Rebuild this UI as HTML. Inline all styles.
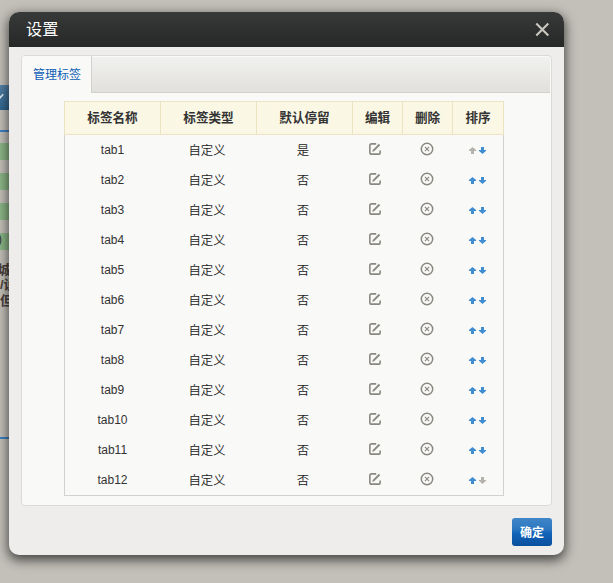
<!DOCTYPE html>
<html lang="zh-CN">
<head>
<meta charset="utf-8">
<title>设置</title>
<style>
*{box-sizing:border-box;margin:0;padding:0}
html,body{width:613px;height:583px;overflow:hidden}
body{background:#c3c0b9;font-family:"Liberation Sans","Noto Sans CJK SC",sans-serif;position:relative;font-size:12px;color:#333}
.bgstrip{position:absolute;left:0;top:0;width:12px;height:583px;overflow:hidden}
.bgstrip div{position:absolute;left:0}
.bgstrip .tx{font-size:13px;font-weight:bold;color:#4a3f3c;line-height:15px;white-space:nowrap}
.dlg{position:absolute;left:9px;top:12px;width:555px;height:543px;border-radius:10px;background:#eeedeb;box-shadow:0 4px 12px 1px rgba(0,0,0,.66);overflow:hidden}
.hd{position:absolute;left:0;top:0;width:100%;height:35px;background:linear-gradient(#373a38,#262827)}
.hd .t{position:absolute;left:17px;top:6px;font-size:16.2px;line-height:22px;color:#fff}
.hd svg{position:absolute;left:526px;top:10px;overflow:visible}
.panel{position:absolute;left:12px;top:43px;width:531px;height:451px;border:1px solid #dbdad6;border-radius:4px;background:#f9f9f7}
.strip{position:absolute;left:1px;top:1px;width:527px;height:36px;background:linear-gradient(#f1f1ef,#e1e0dd);border-bottom:1px solid #d2d1ce;border-radius:2px 2px 0 0}
.tab{position:absolute;left:0;top:0;width:70px;height:37px;background:#f9f9f7;border-right:1px solid #d2d1ce;border-radius:3px 0 0 0;color:#0e5db6;font-size:12px;line-height:39px;text-align:center;padding-left:1px}
/* table: page x 64..504, y 101..496 ; panel content origin at page (22,56) */
.tbl{position:absolute;left:42px;top:45px;width:440px;height:395px;border:1px solid #d3d2ce;background:#f9f9f7}
.th{position:absolute;left:-1px;top:-1px;width:440px;height:34px;background:#faf7e5;border:1px solid #ebe4c3}
.th span{position:absolute;top:0;height:32px;line-height:32.4px;text-align:center;font-size:12.6px;font-weight:bold;color:#333;border-left:1px solid #ebe4c3}
.th span:first-child{border-left:none}
.r{position:absolute;left:0;width:438px;height:30px}
.r span{position:absolute;top:0;height:30px;line-height:30px;text-align:center;font-size:12px;color:#333}
.r .k{font-weight:350;color:#222;font-size:12.4px}
.c1{left:0;width:95px}.c2{left:94px;width:96px;top:1px!important}.c3{left:190px;width:96px;top:1px!important}
.r svg{position:absolute}
.ie{left:304px;top:8px}.id{left:355px;top:7.1px}.ia{left:403.8px;top:11.8px}
.btn{position:absolute;left:503px;top:506px;width:40px;height:28px;border-radius:3px;background:linear-gradient(#4086c8 0%,#2b77c0 40%,#1163b8 55%,#0a4f9e 100%);color:#fff;font-size:12px;font-weight:bold;line-height:30px;text-align:center}
</style>
</head>
<body>
<div class="bgstrip">
  <div style="top:85px;width:9px;height:25px;background:linear-gradient(#5583a8,#2f6590)"></div>
  <div style="top:130px;width:9px;height:1.6px;background:#3b82c4"></div>
  <div style="top:143px;width:9px;height:17px;background:#8cb687"></div>
  <div style="top:173px;width:9px;height:17px;background:#8cb687"></div>
  <div style="top:203px;width:9px;height:17px;background:#8cb687"></div>
  <div style="top:233px;width:9px;height:17px;background:#8cb687"></div>
  <div class="tx" style="top:232px;left:-2px;font-weight:normal;font-size:12px;color:#333">)</div>
  <svg style="position:absolute;left:0;top:92px" width="6" height="10" viewBox="0 0 6 10"><path d="M-3.6 3.4L-0.6 6.4L3.2 2.2" stroke="#e8eef4" stroke-width="1.6" fill="none"/></svg>
  <div class="tx" style="top:261.5px;left:-2px">城</div>
  <div class="tx" style="top:277px;left:0">/设</div>
  <div class="tx" style="top:293px;left:0">但</div>
  <div style="top:437.3px;width:9px;height:1.6px;background:#3b82c4"></div>
</div>
<div class="dlg">
  <div class="hd"><span class="t">设置</span>
    <svg width="14" height="14" viewBox="0 0 14 14"><path d="M1.3 1.5L13.3 13.5M13.3 1.5L1.3 13.5" stroke="#cbc8c1" stroke-width="2.1" fill="none"/></svg>
  </div>
  <div class="panel">
    <div class="strip"></div>
    <div class="tab">管理标签</div>
    <div class="tbl">
      <div class="th"><span style="left:0;width:95px">标签名称</span><span style="left:95px;width:96px">标签类型</span><span style="left:191px;width:96px">默认停留</span><span style="left:287px;width:50px">编辑</span><span style="left:337px;width:50px">删除</span><span style="left:387px;width:51px">排序</span></div>
      <div class="r" style="top:33px"><span class="c1">tab1</span><span class="c2 k">自定义</span><span class="c3 k">是</span><svg class="ie" width="12" height="12" viewBox="0 0 12 12"><path d="M7.2 0.85H2.6Q0.85 0.85 0.85 2.6V9.4Q0.85 11.15 2.6 11.15H9.4Q11.15 11.15 11.15 9.4V7.6" stroke="#8b8882" stroke-width="1.6" fill="none"/><path d="M3.2 8.8L3.75 6.9L9.85 0.8L11.2 2.15L5.1 8.25Z" fill="#8b8882"/></svg><svg class="id" width="14" height="14" viewBox="0 0 14 14"><circle cx="7" cy="7" r="5.7" stroke="#8b8882" stroke-width="1.5" fill="none"/><path d="M4.9 4.9L9.1 9.1M9.1 4.9L4.9 9.1" stroke="#8b8882" stroke-width="1.15"/></svg><svg class="ia" width="18" height="8" viewBox="0 0 18 8" style="overflow:visible"><path d="M3.5 0L7.1 3.1V4H5V6.9H2V4H-0.1V3.1Z" fill="#b5b3ac"/><path d="M13.5 6.9L17.1 3.8V2.9H15V0H12V2.9H9.9V3.8Z" fill="#408dd2"/></svg></div>
      <div class="r" style="top:63px"><span class="c1">tab2</span><span class="c2 k">自定义</span><span class="c3 k">否</span><svg class="ie" width="12" height="12" viewBox="0 0 12 12"><path d="M7.2 0.85H2.6Q0.85 0.85 0.85 2.6V9.4Q0.85 11.15 2.6 11.15H9.4Q11.15 11.15 11.15 9.4V7.6" stroke="#8b8882" stroke-width="1.6" fill="none"/><path d="M3.2 8.8L3.75 6.9L9.85 0.8L11.2 2.15L5.1 8.25Z" fill="#8b8882"/></svg><svg class="id" width="14" height="14" viewBox="0 0 14 14"><circle cx="7" cy="7" r="5.7" stroke="#8b8882" stroke-width="1.5" fill="none"/><path d="M4.9 4.9L9.1 9.1M9.1 4.9L4.9 9.1" stroke="#8b8882" stroke-width="1.15"/></svg><svg class="ia" width="18" height="8" viewBox="0 0 18 8" style="overflow:visible"><path d="M3.5 0L7.1 3.1V4H5V6.9H2V4H-0.1V3.1Z" fill="#408dd2"/><path d="M13.5 6.9L17.1 3.8V2.9H15V0H12V2.9H9.9V3.8Z" fill="#408dd2"/></svg></div>
      <div class="r" style="top:93px"><span class="c1">tab3</span><span class="c2 k">自定义</span><span class="c3 k">否</span><svg class="ie" width="12" height="12" viewBox="0 0 12 12"><path d="M7.2 0.85H2.6Q0.85 0.85 0.85 2.6V9.4Q0.85 11.15 2.6 11.15H9.4Q11.15 11.15 11.15 9.4V7.6" stroke="#8b8882" stroke-width="1.6" fill="none"/><path d="M3.2 8.8L3.75 6.9L9.85 0.8L11.2 2.15L5.1 8.25Z" fill="#8b8882"/></svg><svg class="id" width="14" height="14" viewBox="0 0 14 14"><circle cx="7" cy="7" r="5.7" stroke="#8b8882" stroke-width="1.5" fill="none"/><path d="M4.9 4.9L9.1 9.1M9.1 4.9L4.9 9.1" stroke="#8b8882" stroke-width="1.15"/></svg><svg class="ia" width="18" height="8" viewBox="0 0 18 8" style="overflow:visible"><path d="M3.5 0L7.1 3.1V4H5V6.9H2V4H-0.1V3.1Z" fill="#408dd2"/><path d="M13.5 6.9L17.1 3.8V2.9H15V0H12V2.9H9.9V3.8Z" fill="#408dd2"/></svg></div>
      <div class="r" style="top:123px"><span class="c1">tab4</span><span class="c2 k">自定义</span><span class="c3 k">否</span><svg class="ie" width="12" height="12" viewBox="0 0 12 12"><path d="M7.2 0.85H2.6Q0.85 0.85 0.85 2.6V9.4Q0.85 11.15 2.6 11.15H9.4Q11.15 11.15 11.15 9.4V7.6" stroke="#8b8882" stroke-width="1.6" fill="none"/><path d="M3.2 8.8L3.75 6.9L9.85 0.8L11.2 2.15L5.1 8.25Z" fill="#8b8882"/></svg><svg class="id" width="14" height="14" viewBox="0 0 14 14"><circle cx="7" cy="7" r="5.7" stroke="#8b8882" stroke-width="1.5" fill="none"/><path d="M4.9 4.9L9.1 9.1M9.1 4.9L4.9 9.1" stroke="#8b8882" stroke-width="1.15"/></svg><svg class="ia" width="18" height="8" viewBox="0 0 18 8" style="overflow:visible"><path d="M3.5 0L7.1 3.1V4H5V6.9H2V4H-0.1V3.1Z" fill="#408dd2"/><path d="M13.5 6.9L17.1 3.8V2.9H15V0H12V2.9H9.9V3.8Z" fill="#408dd2"/></svg></div>
      <div class="r" style="top:153px"><span class="c1">tab5</span><span class="c2 k">自定义</span><span class="c3 k">否</span><svg class="ie" width="12" height="12" viewBox="0 0 12 12"><path d="M7.2 0.85H2.6Q0.85 0.85 0.85 2.6V9.4Q0.85 11.15 2.6 11.15H9.4Q11.15 11.15 11.15 9.4V7.6" stroke="#8b8882" stroke-width="1.6" fill="none"/><path d="M3.2 8.8L3.75 6.9L9.85 0.8L11.2 2.15L5.1 8.25Z" fill="#8b8882"/></svg><svg class="id" width="14" height="14" viewBox="0 0 14 14"><circle cx="7" cy="7" r="5.7" stroke="#8b8882" stroke-width="1.5" fill="none"/><path d="M4.9 4.9L9.1 9.1M9.1 4.9L4.9 9.1" stroke="#8b8882" stroke-width="1.15"/></svg><svg class="ia" width="18" height="8" viewBox="0 0 18 8" style="overflow:visible"><path d="M3.5 0L7.1 3.1V4H5V6.9H2V4H-0.1V3.1Z" fill="#408dd2"/><path d="M13.5 6.9L17.1 3.8V2.9H15V0H12V2.9H9.9V3.8Z" fill="#408dd2"/></svg></div>
      <div class="r" style="top:183px"><span class="c1">tab6</span><span class="c2 k">自定义</span><span class="c3 k">否</span><svg class="ie" width="12" height="12" viewBox="0 0 12 12"><path d="M7.2 0.85H2.6Q0.85 0.85 0.85 2.6V9.4Q0.85 11.15 2.6 11.15H9.4Q11.15 11.15 11.15 9.4V7.6" stroke="#8b8882" stroke-width="1.6" fill="none"/><path d="M3.2 8.8L3.75 6.9L9.85 0.8L11.2 2.15L5.1 8.25Z" fill="#8b8882"/></svg><svg class="id" width="14" height="14" viewBox="0 0 14 14"><circle cx="7" cy="7" r="5.7" stroke="#8b8882" stroke-width="1.5" fill="none"/><path d="M4.9 4.9L9.1 9.1M9.1 4.9L4.9 9.1" stroke="#8b8882" stroke-width="1.15"/></svg><svg class="ia" width="18" height="8" viewBox="0 0 18 8" style="overflow:visible"><path d="M3.5 0L7.1 3.1V4H5V6.9H2V4H-0.1V3.1Z" fill="#408dd2"/><path d="M13.5 6.9L17.1 3.8V2.9H15V0H12V2.9H9.9V3.8Z" fill="#408dd2"/></svg></div>
      <div class="r" style="top:213px"><span class="c1">tab7</span><span class="c2 k">自定义</span><span class="c3 k">否</span><svg class="ie" width="12" height="12" viewBox="0 0 12 12"><path d="M7.2 0.85H2.6Q0.85 0.85 0.85 2.6V9.4Q0.85 11.15 2.6 11.15H9.4Q11.15 11.15 11.15 9.4V7.6" stroke="#8b8882" stroke-width="1.6" fill="none"/><path d="M3.2 8.8L3.75 6.9L9.85 0.8L11.2 2.15L5.1 8.25Z" fill="#8b8882"/></svg><svg class="id" width="14" height="14" viewBox="0 0 14 14"><circle cx="7" cy="7" r="5.7" stroke="#8b8882" stroke-width="1.5" fill="none"/><path d="M4.9 4.9L9.1 9.1M9.1 4.9L4.9 9.1" stroke="#8b8882" stroke-width="1.15"/></svg><svg class="ia" width="18" height="8" viewBox="0 0 18 8" style="overflow:visible"><path d="M3.5 0L7.1 3.1V4H5V6.9H2V4H-0.1V3.1Z" fill="#408dd2"/><path d="M13.5 6.9L17.1 3.8V2.9H15V0H12V2.9H9.9V3.8Z" fill="#408dd2"/></svg></div>
      <div class="r" style="top:243px"><span class="c1">tab8</span><span class="c2 k">自定义</span><span class="c3 k">否</span><svg class="ie" width="12" height="12" viewBox="0 0 12 12"><path d="M7.2 0.85H2.6Q0.85 0.85 0.85 2.6V9.4Q0.85 11.15 2.6 11.15H9.4Q11.15 11.15 11.15 9.4V7.6" stroke="#8b8882" stroke-width="1.6" fill="none"/><path d="M3.2 8.8L3.75 6.9L9.85 0.8L11.2 2.15L5.1 8.25Z" fill="#8b8882"/></svg><svg class="id" width="14" height="14" viewBox="0 0 14 14"><circle cx="7" cy="7" r="5.7" stroke="#8b8882" stroke-width="1.5" fill="none"/><path d="M4.9 4.9L9.1 9.1M9.1 4.9L4.9 9.1" stroke="#8b8882" stroke-width="1.15"/></svg><svg class="ia" width="18" height="8" viewBox="0 0 18 8" style="overflow:visible"><path d="M3.5 0L7.1 3.1V4H5V6.9H2V4H-0.1V3.1Z" fill="#408dd2"/><path d="M13.5 6.9L17.1 3.8V2.9H15V0H12V2.9H9.9V3.8Z" fill="#408dd2"/></svg></div>
      <div class="r" style="top:273px"><span class="c1">tab9</span><span class="c2 k">自定义</span><span class="c3 k">否</span><svg class="ie" width="12" height="12" viewBox="0 0 12 12"><path d="M7.2 0.85H2.6Q0.85 0.85 0.85 2.6V9.4Q0.85 11.15 2.6 11.15H9.4Q11.15 11.15 11.15 9.4V7.6" stroke="#8b8882" stroke-width="1.6" fill="none"/><path d="M3.2 8.8L3.75 6.9L9.85 0.8L11.2 2.15L5.1 8.25Z" fill="#8b8882"/></svg><svg class="id" width="14" height="14" viewBox="0 0 14 14"><circle cx="7" cy="7" r="5.7" stroke="#8b8882" stroke-width="1.5" fill="none"/><path d="M4.9 4.9L9.1 9.1M9.1 4.9L4.9 9.1" stroke="#8b8882" stroke-width="1.15"/></svg><svg class="ia" width="18" height="8" viewBox="0 0 18 8" style="overflow:visible"><path d="M3.5 0L7.1 3.1V4H5V6.9H2V4H-0.1V3.1Z" fill="#408dd2"/><path d="M13.5 6.9L17.1 3.8V2.9H15V0H12V2.9H9.9V3.8Z" fill="#408dd2"/></svg></div>
      <div class="r" style="top:303px"><span class="c1">tab10</span><span class="c2 k">自定义</span><span class="c3 k">否</span><svg class="ie" width="12" height="12" viewBox="0 0 12 12"><path d="M7.2 0.85H2.6Q0.85 0.85 0.85 2.6V9.4Q0.85 11.15 2.6 11.15H9.4Q11.15 11.15 11.15 9.4V7.6" stroke="#8b8882" stroke-width="1.6" fill="none"/><path d="M3.2 8.8L3.75 6.9L9.85 0.8L11.2 2.15L5.1 8.25Z" fill="#8b8882"/></svg><svg class="id" width="14" height="14" viewBox="0 0 14 14"><circle cx="7" cy="7" r="5.7" stroke="#8b8882" stroke-width="1.5" fill="none"/><path d="M4.9 4.9L9.1 9.1M9.1 4.9L4.9 9.1" stroke="#8b8882" stroke-width="1.15"/></svg><svg class="ia" width="18" height="8" viewBox="0 0 18 8" style="overflow:visible"><path d="M3.5 0L7.1 3.1V4H5V6.9H2V4H-0.1V3.1Z" fill="#408dd2"/><path d="M13.5 6.9L17.1 3.8V2.9H15V0H12V2.9H9.9V3.8Z" fill="#408dd2"/></svg></div>
      <div class="r" style="top:333px"><span class="c1">tab11</span><span class="c2 k">自定义</span><span class="c3 k">否</span><svg class="ie" width="12" height="12" viewBox="0 0 12 12"><path d="M7.2 0.85H2.6Q0.85 0.85 0.85 2.6V9.4Q0.85 11.15 2.6 11.15H9.4Q11.15 11.15 11.15 9.4V7.6" stroke="#8b8882" stroke-width="1.6" fill="none"/><path d="M3.2 8.8L3.75 6.9L9.85 0.8L11.2 2.15L5.1 8.25Z" fill="#8b8882"/></svg><svg class="id" width="14" height="14" viewBox="0 0 14 14"><circle cx="7" cy="7" r="5.7" stroke="#8b8882" stroke-width="1.5" fill="none"/><path d="M4.9 4.9L9.1 9.1M9.1 4.9L4.9 9.1" stroke="#8b8882" stroke-width="1.15"/></svg><svg class="ia" width="18" height="8" viewBox="0 0 18 8" style="overflow:visible"><path d="M3.5 0L7.1 3.1V4H5V6.9H2V4H-0.1V3.1Z" fill="#408dd2"/><path d="M13.5 6.9L17.1 3.8V2.9H15V0H12V2.9H9.9V3.8Z" fill="#408dd2"/></svg></div>
      <div class="r" style="top:363px"><span class="c1">tab12</span><span class="c2 k">自定义</span><span class="c3 k">否</span><svg class="ie" width="12" height="12" viewBox="0 0 12 12"><path d="M7.2 0.85H2.6Q0.85 0.85 0.85 2.6V9.4Q0.85 11.15 2.6 11.15H9.4Q11.15 11.15 11.15 9.4V7.6" stroke="#8b8882" stroke-width="1.6" fill="none"/><path d="M3.2 8.8L3.75 6.9L9.85 0.8L11.2 2.15L5.1 8.25Z" fill="#8b8882"/></svg><svg class="id" width="14" height="14" viewBox="0 0 14 14"><circle cx="7" cy="7" r="5.7" stroke="#8b8882" stroke-width="1.5" fill="none"/><path d="M4.9 4.9L9.1 9.1M9.1 4.9L4.9 9.1" stroke="#8b8882" stroke-width="1.15"/></svg><svg class="ia" width="18" height="8" viewBox="0 0 18 8" style="overflow:visible"><path d="M3.5 0L7.1 3.1V4H5V6.9H2V4H-0.1V3.1Z" fill="#408dd2"/><path d="M13.5 6.9L17.1 3.8V2.9H15V0H12V2.9H9.9V3.8Z" fill="#b5b3ac"/></svg></div>
    </div>
  </div>
  <div class="btn">确定</div>
</div>
</body>
</html>
